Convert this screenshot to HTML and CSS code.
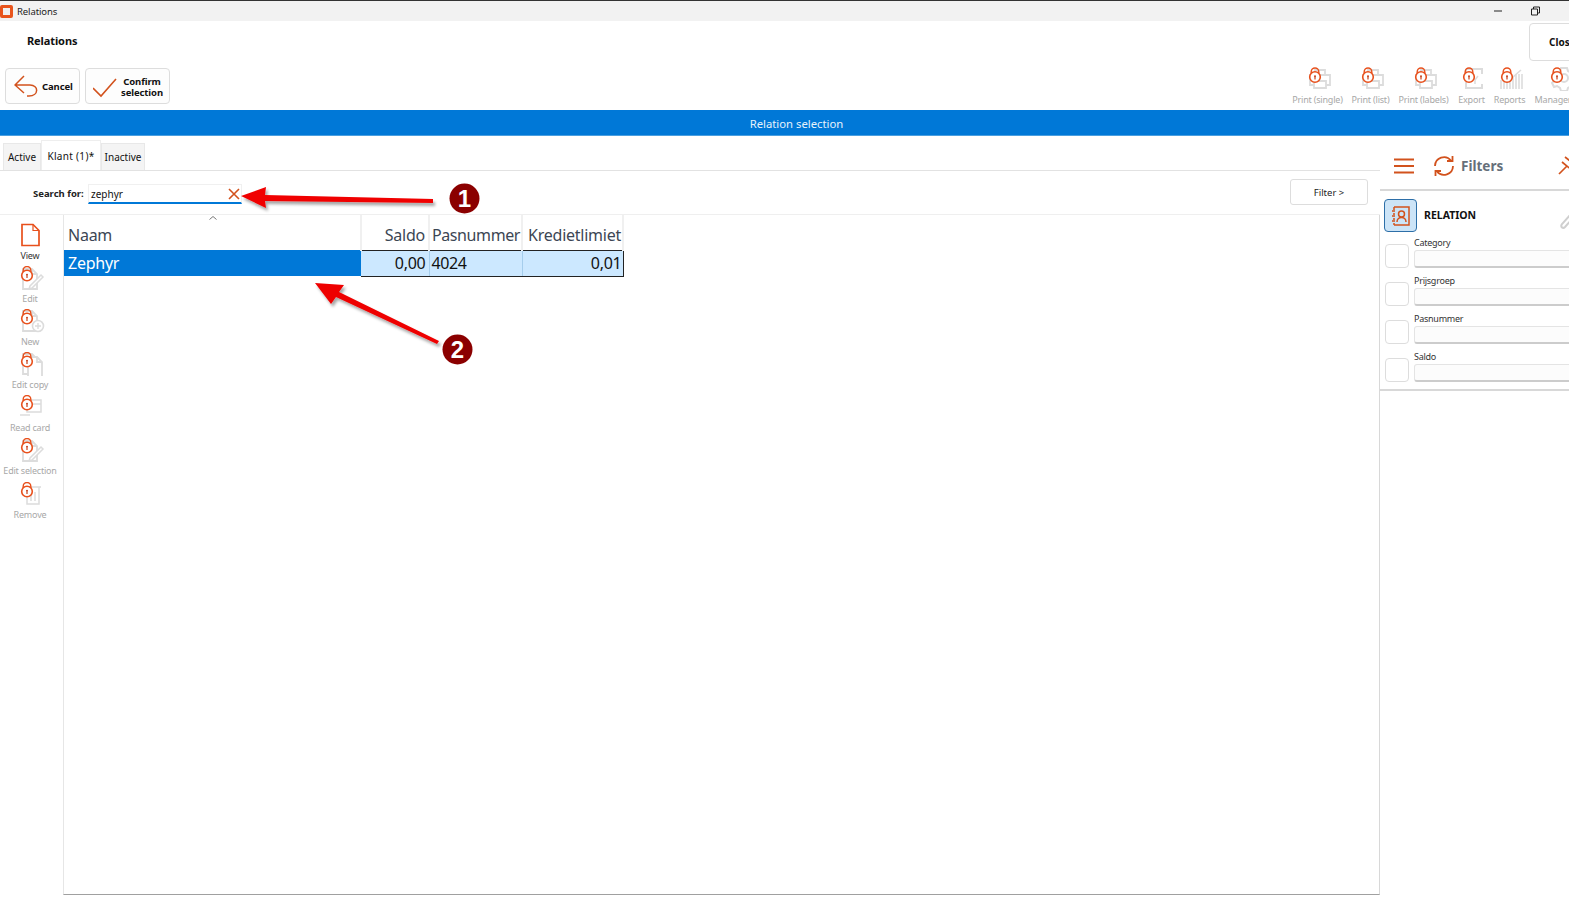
FILE: index.html
```html
<!DOCTYPE html>
<html lang="en">
<head>
<meta charset="utf-8">
<title>Relations</title>
<link rel="stylesheet" href="styles.css">
</head>
<body>
<svg class="defs" width="0" height="0" aria-hidden="true">
  <defs>
    <g id="lock" fill="none" stroke="#e8501c">
      <path d="M-3.800 -3.500V-5.200a3.800 3.800 0 0 1 7.600 0V-3.500" stroke-width="1.400"/>
      <circle cx="0" cy="0" r="5.300" stroke-width="1.600" fill="#fff"/>
      <circle cx="0" cy="-.8" r="1" fill="#c8401a" stroke="none"/>
      <path d="M0 0v2.600" stroke="#c8401a" stroke-width="1.200"/>
    </g>
    <g id="g-print" fill="#fff" stroke="#dcdcdc" stroke-width="1.800">
      <path d="M8 4h10v5h-10z"/><path d="M3 9h20v10H3z"/><path d="M7 15h12v7H7z"/>
    </g>
    <g id="g-export" fill="none" stroke="#dcdcdc" stroke-width="2">
      <path d="M4 3h16v5M4 3v6M4 16v6h16v-4"/><path d="M10 10l3 4 3-4M13 14v4" stroke-width="1.500"/>
    </g>
    <g id="g-reports" fill="none" stroke="#dcdcdc" stroke-width="1.600">
      <path d="M2 23v-9M5 23v-9M8 23V12M11 23v-9M14 23V10M17 23V8M20 23V8M23 23V8"/><path d="M4 9l6-1 4 3 8-7"/>
    </g>
    <g id="g-manager" fill="none" stroke="#dcdcdc" stroke-width="2">
      <path d="M11 3h6l1 3 3 2 3-1 2 4-2 2v3l2 2-2 4-3-1-3 2-1 3h-6l-1-3-3-2-3 1-2-4 2-2v-3l-2-2 2-4 3 1 3-2z"/>
      <circle cx="14" cy="13" r="4"/>
    </g>
    <g id="g-doc" fill="#fff" stroke="#dcdcdc" stroke-width="1.800">
      <path d="M4 2h9l5 5v15H4z"/><path d="M13 2v5h5" fill="none"/>
    </g>
  </defs>
</svg>

<div class="app">
  <div class="titlebar">
    <span class="app-icon"></span>
    <span class="window-title">Relations</span>
    <div class="window-controls">
      <svg class="win-min" width="10" height="10" viewBox="0 0 10 10"><path d="M1 5h8" stroke="#222" stroke-width="1"/></svg>
      <svg class="win-restore" width="10" height="10" viewBox="0 0 10 10"><path d="M1.500 3h6v6h-6zM3.500 3V1h6v6h-2" fill="none" stroke="#222" stroke-width="1"/></svg>
    </div>
  </div>

  <header class="head">
    <div class="head-top">
      <div class="page-title">Relations</div>
      <button class="close-btn">Close</button>
    </div>
    <div class="head-bottom">
      <div class="actions">
        <button class="action cancel">
          <svg width="26" height="24" viewBox="0 0 26 24" fill="none" stroke="#d2521d" stroke-width="1.500"><path d="M10 2L1 11l9 8M1 11h15c9 0 9 11-1 11h-2"/></svg>
          <span>Cancel</span>
        </button>
        <button class="action confirm">
          <svg width="26" height="24" viewBox="0 0 26 24" fill="none" stroke="#d2521d" stroke-width="1.600"><path d="M0 14l8 8L23 5"/></svg>
          <span>Confirm<br>selection</span>
        </button>
      </div>
      <div class="tools">
        <div class="tool t1"><svg width="30" height="26" viewBox="0 0 30 26"><use href="#g-print" x="4" y="1"/><use href="#lock" x="12" y="12"/></svg><span>Print (single)</span></div>
        <div class="tool t2"><svg width="30" height="26" viewBox="0 0 30 26"><use href="#g-print" x="4" y="1"/><use href="#lock" x="12" y="12"/></svg><span>Print (list)</span></div>
        <div class="tool t3"><svg width="30" height="26" viewBox="0 0 30 26"><use href="#g-print" x="4" y="1"/><use href="#lock" x="12" y="12"/></svg><span>Print (labels)</span></div>
        <div class="tool t4"><svg width="30" height="26" viewBox="0 0 30 26"><use href="#g-export" x="5" y="1"/><use href="#lock" x="12" y="12"/></svg><span>Export</span></div>
        <div class="tool t5"><svg width="30" height="26" viewBox="0 0 30 26"><use href="#g-reports" x="4" y="1"/><use href="#lock" x="12" y="12"/></svg><span>Reports</span></div>
        <div class="tool t6"><svg width="44" height="26" viewBox="0 0 44 26"><use href="#g-manager" x="19" y="0"/><use href="#lock" x="26" y="12"/></svg><span>Manager</span></div>
      </div>
    </div>
  </header>

  <div class="band">Relation selection</div>

  <div class="content">
    <main class="main">
      <div class="tabs">
        <span class="tab">Active</span>
        <span class="tab tab-on">Klant (1)*</span>
        <span class="tab">Inactive</span>
      </div>
      <div class="search-row">
        <label class="search-label">Search for:</label>
        <div class="search-box">
          <span>zephyr</span>
          <svg width="12" height="12" viewBox="0 0 12 12"><path d="M1 1l10 10M11 1L1 11" stroke="#d2521d" stroke-width="1.600"/></svg>
        </div>
        <button class="filter-btn">Filter &gt;</button>
      </div>
      <div class="work">
        <aside class="side-tools">
          <div class="st st-on"><svg width="30" height="24" viewBox="0 0 30 24"><path d="M7 1.500h11l6 6V22.500H7z" fill="#fff" stroke="#e8501c" stroke-width="1.700"/><path d="M18 1.500v6h6" fill="none" stroke="#e8501c" stroke-width="1.200"/></svg><span>View</span></div>
          <div class="st"><svg width="30" height="24" viewBox="0 0 30 24"><use href="#g-doc" x="4" y="1"/><path d="M28 11L17 22l-3 1 1-3 11-11z" fill="#fff" stroke="#dcdcdc" stroke-width="1.500"/><use href="#lock" x="12" y="9.500"/></svg><span>Edit</span></div>
          <div class="st"><svg width="30" height="24" viewBox="0 0 30 24"><use href="#g-doc" x="4" y="0"/><circle cx="23" cy="17" r="5.500" fill="#fff" stroke="#dcdcdc" stroke-width="1.600"/><path d="M20 17h6M23 14v6" stroke="#dcdcdc" stroke-width="1.400"/><use href="#lock" x="12" y="9.500"/></svg><span>New</span></div>
          <div class="st"><svg width="30" height="24" viewBox="0 0 30 24"><use href="#g-doc" x="4" y="0"/><use href="#g-doc" x="9" y="3"/><use href="#lock" x="12" y="9.500"/></svg><span>Edit copy</span></div>
          <div class="st"><svg width="30" height="24" viewBox="0 0 30 24"><path d="M12 5h14v12H12zM12 9h14" fill="#fff" stroke="#dcdcdc" stroke-width="1.500"/><path d="M5 20h10" stroke="#dcdcdc" stroke-width="1.500"/><use href="#lock" x="12" y="9.500"/></svg><span>Read card</span></div>
          <div class="st"><svg width="30" height="24" viewBox="0 0 30 24"><use href="#g-doc" x="4" y="1"/><path d="M28 11L17 22l-3 1 1-3 11-11z" fill="#fff" stroke="#dcdcdc" stroke-width="1.500"/><use href="#lock" x="12" y="9.500"/></svg><span>Edit selection</span></div>
          <div class="st"><svg width="30" height="24" viewBox="0 0 30 24"><path d="M12 5h12v17H12zM10 5h16M16 10v9M20 10v9" fill="#fff" stroke="#dcdcdc" stroke-width="1.500"/><use href="#lock" x="12" y="9.500"/></svg><span>Remove</span></div>
        </aside>
        <section class="grid-wrap">
          <table class="grid">
            <colgroup><col class="c-naam"><col class="c-saldo"><col class="c-pas"><col class="c-kred"></colgroup>
            <thead>
              <tr>
                <th class="left first sort">Naam<svg class="caret" width="8" height="4" viewBox="0 0 8 4"><path d="M.5 3.500L4 .5l3.500 3" fill="none" stroke="#777"/></svg></th>
                <th class="right">Saldo</th>
                <th class="left pas">Pasnummer</th>
                <th class="right kred">Kredietlimiet</th>
              </tr>
            </thead>
            <tbody>
              <tr>
                <td class="left first sel">Zephyr</td>
                <td class="right lit">0,00</td>
                <td class="left lit pas">4024</td>
                <td class="right lit last kred">0,01</td>
              </tr>
            </tbody>
          </table>
        </section>
      </div>
    </main>

    <aside class="filters">
      <div class="filters-head">
        <svg class="menu" width="22" height="16" viewBox="0 0 22 16"><path d="M1 1.500h20M1 8h20M1 14.500h20" stroke="#d2521d" stroke-width="1.800"/></svg>
        <svg class="refresh" width="22" height="22" viewBox="0 0 22 22" fill="none" stroke="#d2521d" stroke-width="1.800"><path d="M2 11a9 9 0 0 1 16-5.500M20 11a9 9 0 0 1-16 5.500"/><path d="M19.500 1v5h-5.500M2.500 21v-5H8"/></svg>
        <span class="filters-title">Filters</span>
        <svg class="pin" width="18" height="22" viewBox="0 0 18 22" fill="none" stroke="#d2521d" stroke-width="1.700"><path d="M1 19l8-8M4 7l11 9M7 2l9 7"/></svg>
      </div>
      <div class="filters-body">
        <div class="group-head">
          <span class="group-icon"><svg width="22" height="22" viewBox="0 0 22 22" fill="none" stroke="#d2521d" stroke-width="1.500"><path d="M4 2h15v18H4M4 2v3M4 8v2M4 13v2M4 18v2M2 6h3M2 11h3M2 16h3"/><circle cx="11.500" cy="9" r="3"/><path d="M7 17c0-6 9-6 9 0"/></svg></span>
          <span class="group-title">RELATION</span>
          <svg class="clip" width="14" height="18" viewBox="0 0 14 18" fill="none" stroke="#cfcfcf" stroke-width="2"><path d="M12 1L2 12c-2 3 1 5 3 3L14 5"/></svg>
        </div>
        <div class="f-row"><span class="f-check"></span><div class="f-field"><label>Category</label><span class="f-input"></span></div></div>
        <div class="f-row"><span class="f-check"></span><div class="f-field"><label>Prijsgroep</label><span class="f-input"></span></div></div>
        <div class="f-row"><span class="f-check"></span><div class="f-field"><label>Pasnummer</label><span class="f-input"></span></div></div>
        <div class="f-row"><span class="f-check"></span><div class="f-field"><label>Saldo</label><span class="f-input"></span></div></div>
      </div>
    </aside>
  </div>
</div>

<svg class="marks" width="1569" height="897" viewBox="0 0 1569 897" aria-hidden="true">
  <defs>
    <filter id="sh" x="-10%" y="-30%" width="120%" height="160%"><feDropShadow dx="2" dy="3" stdDeviation="1.500" flood-color="#000" flood-opacity=".35"/></filter>
  </defs>
  <path filter="url(#sh)" fill="#f00000" d="M241 196L266 187L265 195L433 199L433 203L265 201L266 208Z"/>
  <path filter="url(#sh)" fill="#ee0000" d="M315 283L344 285L339 292L439 341L437 344L336 297L331 304Z"/>
  <circle cx="464.500" cy="198.500" r="15" fill="#8b0000"/>
  <circle cx="457.500" cy="349.500" r="15" fill="#8b0000"/>
  <text class="num" x="464.500" y="207" text-anchor="middle">1</text>
  <text class="num" x="457.500" y="358" text-anchor="middle">2</text>
</svg>
</body>
</html>
```

FILE: styles.css
```css
* { box-sizing: border-box; }
html, body { margin: 0; padding: 0; width: 1569px; height: 897px; overflow: hidden; background: #fff; }
body { font-family: "Noto Sans", "Liberation Sans", sans-serif; color: #111; position: relative; }
button { font-family: inherit; }
.defs { position: absolute; }
.app { display: flex; flex-direction: column; width: 1569px; height: 897px; }

.titlebar { height: 21px; flex: none; border-top: 1px solid #333; background: #f2f2f2; display: flex; align-items: center; font-size: 9.500px; letter-spacing: -.1px; color: #222; }
.app-icon { width: 13px; height: 13px; background: #f0f0f0; border: 3px solid #e8541c; border-radius: 2px; }
.window-title { margin-left: 4px; }
.window-controls { margin-left: auto; display: flex; align-items: center; gap: 27px; margin-right: 29px; }

.head { height: 89px; flex: none; background: #fff; display: flex; flex-direction: column; }
.head-top { height: 40px; display: flex; align-items: flex-start; justify-content: space-between; }
.page-title { font-size: 11px; font-weight: 700; letter-spacing: -.1px; margin: 12px 0 0 27px; }
.close-btn { width: 60px; height: 38px; margin: 2px -20px 0 0; border: 1px solid #ddd; border-radius: 4px; background: #fff; font-size: 10px; font-weight: 700; text-align: left; padding: 0 0 0 19px; color: #111; }
.head-bottom { flex: 1; display: flex; justify-content: space-between; }
.actions { display: flex; gap: 5px; margin: 7px 0 0 5px; align-items: flex-start; }
.action { height: 36px; display: flex; align-items: center; border: 1px solid #ddd; border-radius: 4px; background: #fdfdfd; font-size: 9.500px; font-weight: 700; padding: 0; color: #111; line-height: 11px; letter-spacing: -.1px; }
.cancel { width: 75px; padding-left: 8px; gap: 2px; }
.confirm { width: 85px; padding-left: 7px; gap: 2px; }
.confirm span { text-align: center; margin-top: 2px; }
.tools { display: flex; margin-right: -11px; }
.tool { display: flex; flex-direction: column; align-items: center; font-size: 9px; letter-spacing: -.2px; color: #a8a8a8; padding-top: 4px; }
.tool svg { display: block; margin-bottom: 2px; flex: none; }
.tool span { line-height: 13px; white-space: nowrap; }
.t1, .t2, .t3 { width: 53px; }
.t4 { width: 43px; }
.t5 { width: 33px; }
.t6 { width: 54px; }

.band { height: 26px; flex: none; background: #0078d7; color: #e6f2fb; font-size: 11.300px; display: flex; align-items: center; justify-content: center; padding-left: 24px; box-shadow: inset 0 -1px 0 #4a9fe0; }

.content { flex: 1; display: flex; min-height: 0; }
.main { flex: 1; min-width: 0; display: flex; flex-direction: column; }
.tabs { height: 35px; flex: none; display: flex; align-items: flex-end; padding-left: 3px; border-bottom: 1px solid #e2e2e2; font-size: 10px; }
.tab { height: 27px; padding: 0 3px; display: flex; align-items: center; background: #f4f4f4; border: 1px solid #e8e8e8; border-bottom: 0; }
.tab:first-child { width: 38px; justify-content: center; }
.tab:last-child { width: 44px; justify-content: center; }
.tab-on { height: 30px; width: 60px; background: #fff; justify-content: center; padding-bottom: 0; letter-spacing: .3px; border-color: #eee; }

.search-row { height: 44px; flex: none; display: flex; align-items: flex-start; border-bottom: 1px solid #efefef; }
.search-label { font-size: 9.500px; font-weight: 700; margin: 16px 0 0 33px; width: 55px; color: #222; }
.search-box { width: 154px; height: 20px; margin-top: 13px; border: 1px solid #f0f0f0; border-bottom: 2px solid #0078d7; display: flex; align-items: center; justify-content: space-between; padding: 0 1px 0 2px; font-size: 10px; }
.filter-btn { margin: 8px 12px 0 auto; width: 78px; height: 26px; background: #fff; border: 1px solid #ddd; border-radius: 3px; font-size: 9.500px; color: #222; }

.work { flex: 1; display: flex; min-height: 0; }
.side-tools { width: 63px; flex: none; padding: 8px 3px 0 0; display: flex; flex-direction: column; }
.st { height: 43.100px; display: flex; flex-direction: column; align-items: center; font-size: 9px; letter-spacing: -.2px; color: #a8a8a8; white-space: nowrap; }
.st svg { display: block; flex: none; margin-bottom: 3px; }
.st span { line-height: 12px; }
.st-on { color: #333; }

.grid-wrap { flex: 1; min-width: 0; border-left: 1px solid #e6e6e6; border-right: 1px solid #d8d8d8; border-bottom: 1px solid #a0a0a0; margin-bottom: 2px; }
.grid { border-collapse: collapse; table-layout: fixed; width: 559px; font-size: 16px; letter-spacing: -.25px; }
.c-naam { width: 297px; } .c-saldo { width: 68px; } .c-pas { width: 93px; } .c-kred { width: 101px; }
th, td { padding: 0 3px; white-space: nowrap; overflow: hidden; font-weight: 400; }
th { height: 35px; color: #3c4654; border-right: 2px solid #f0f0f0; padding-top: 5px; position: relative; }
td { height: 26px; color: #111; }
.left { text-align: left; } .right { text-align: right; }
.first { padding-left: 4px; }
.pas { padding-left: 2px; letter-spacing: -.4px; }
.kred { padding-right: 1px; }
.sel { background: #0078d7; color: #fff; }
.lit { background: #cce8ff; border-top: 1px solid #222; border-bottom: 1px solid #222; border-right: 1px solid #a5cdec; }
.last { border-right: 1px solid #222; }
.caret { position: absolute; left: 145px; top: 1px; }

.filters { width: 189px; flex: none; display: flex; flex-direction: column; overflow: hidden; }
.filters-head { height: 55px; flex: none; display: flex; align-items: center; border-bottom: 2px solid #d8d8d8; padding-left: 13px; padding-top: 7px; }
.filters-head svg { flex: none; }
.refresh { margin-left: 18px; }
.filters-title { font-size: 13.500px; font-weight: 700; color: #666f7a; margin-left: 6px; flex: none; }
.pin { margin-left: 55px; }
.filters-body { height: 200px; flex: none; border-bottom: 2px solid #d8d8d8; padding: 8px 0 0 4px; width: 189px; overflow: hidden; }
.group-head { display: flex; align-items: center; height: 33px; margin-bottom: -1px; }
.group-icon { width: 33px; height: 33px; background: #cce4f7; border: 1px solid #2d6fa8; border-radius: 4px; display: flex; align-items: center; justify-content: center; flex: none; }
.group-title { font-size: 10.500px; font-weight: 700; margin: -2px 0 0 7px; flex: none; }
.clip { margin: 10px 0 0 84px; flex: none; }
.f-row { display: flex; align-items: flex-end; height: 38px; width: 240px; }
.f-check { width: 24px; height: 24px; border: 1px solid #ddd; border-radius: 4px; background: #fff; flex: none; margin: 0 5px 1px 1px; }
.f-field { flex: 1; display: flex; flex-direction: column; margin-bottom: 1px; }
.f-field label { font-size: 9px; letter-spacing: -.25px; line-height: 12px; color: #333; margin-bottom: 1px; }
.f-input { height: 18px; border: 1px solid #e4e4e4; border-bottom: 2px solid #ccc; border-radius: 3px; background: #fcfcfc; }

.marks { position: absolute; left: 0; top: 0; pointer-events: none; }
.num { font-family: "Liberation Sans", sans-serif; font-weight: 700; font-size: 24px; fill: #fff; }
```
